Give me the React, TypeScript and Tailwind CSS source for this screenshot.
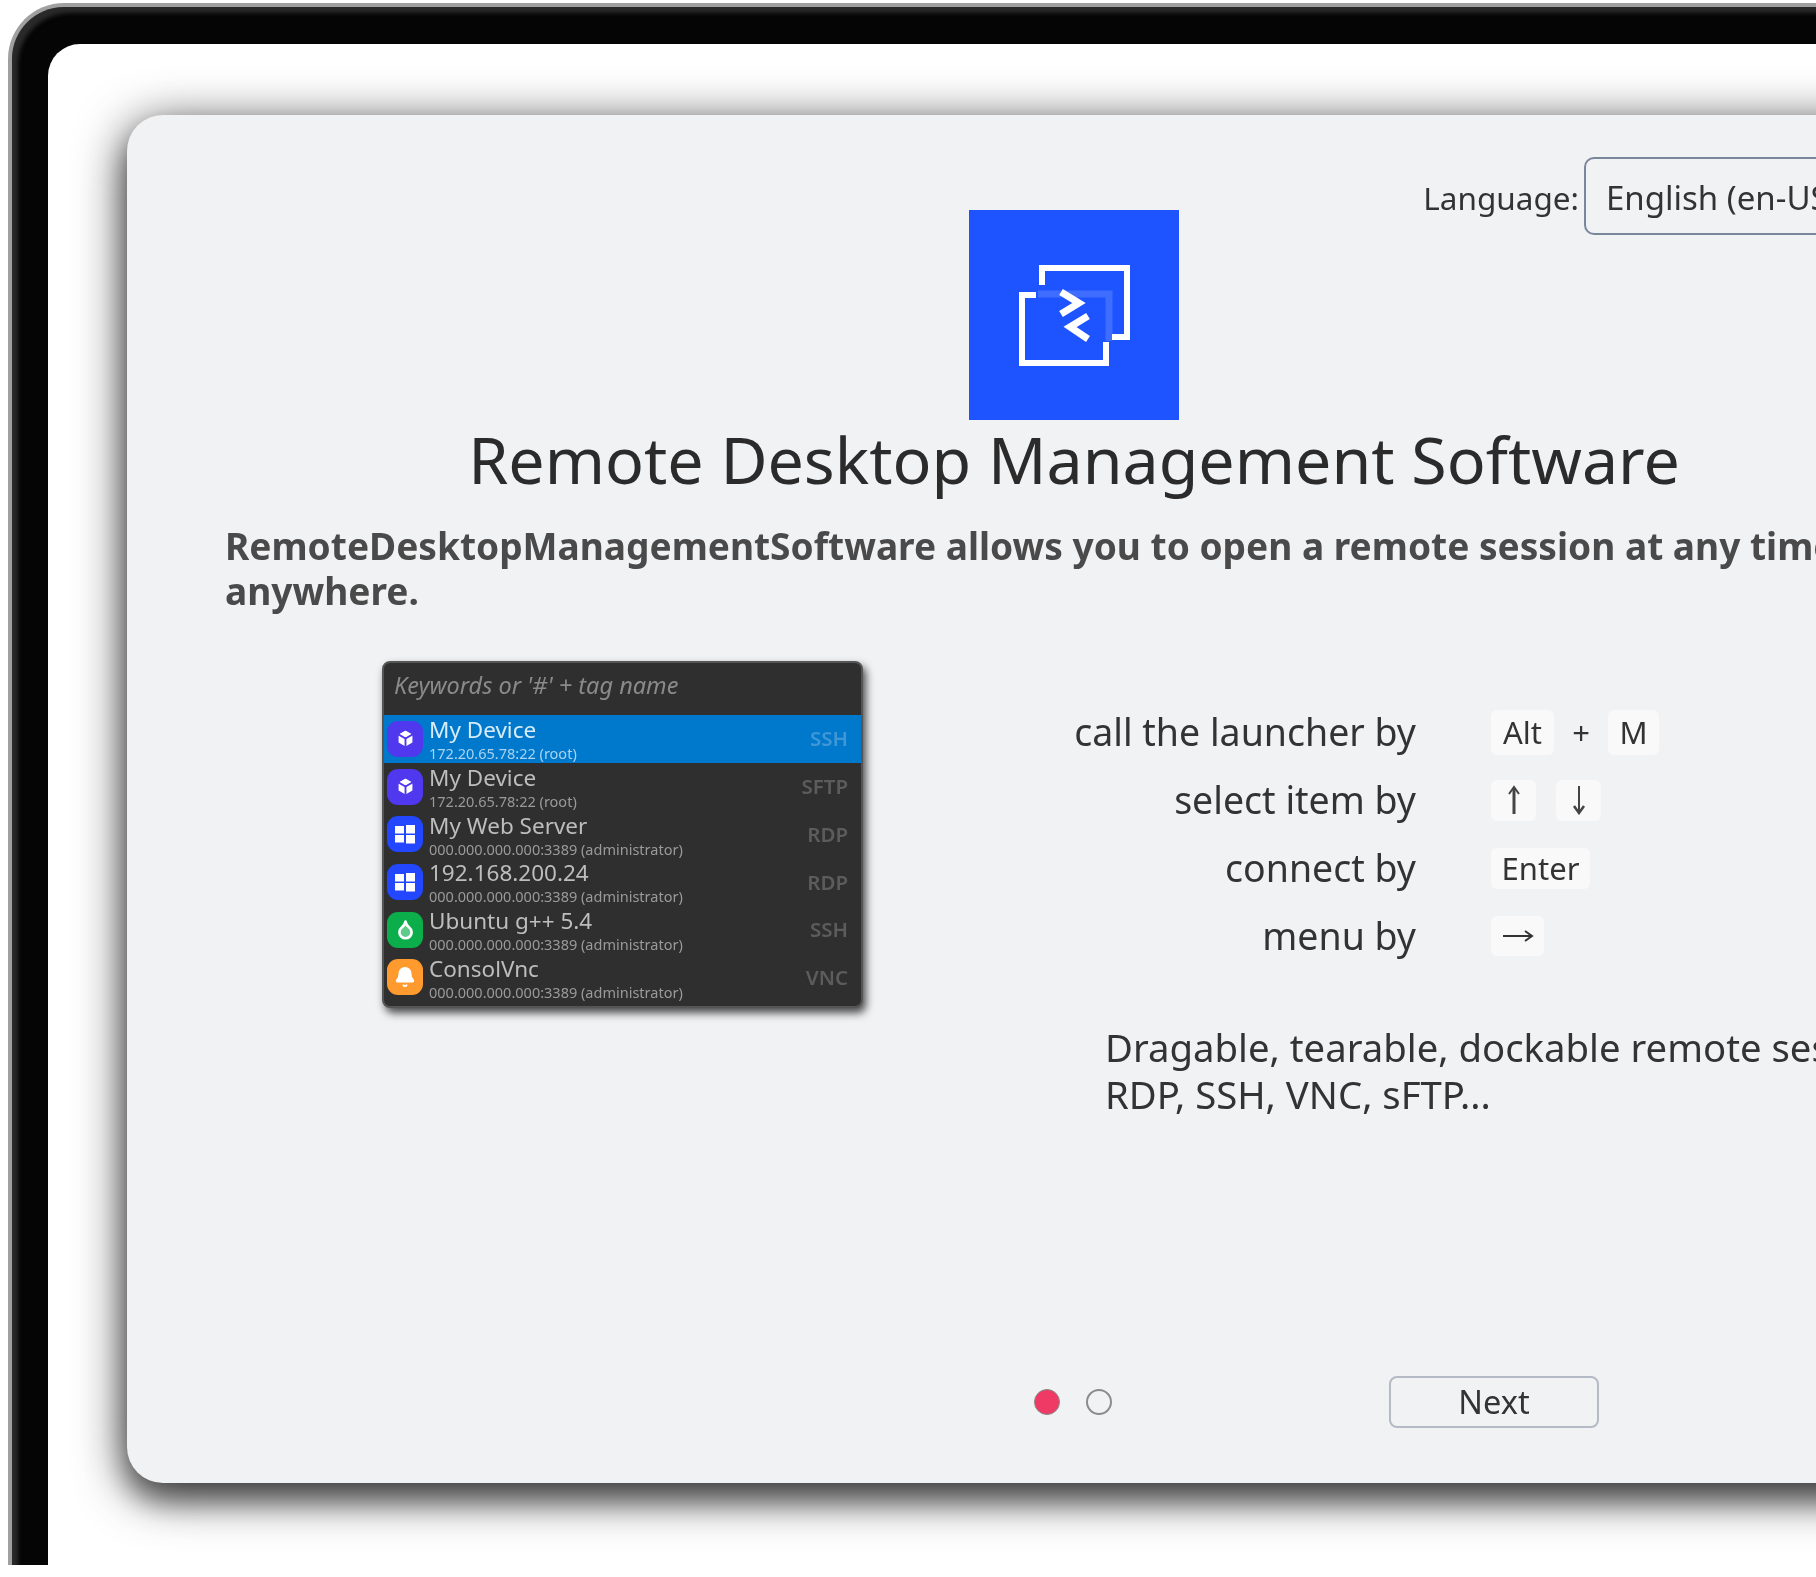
import { Bell, Box, Droplet } from "lucide-react"

const sans = "font-['Noto_Sans','Open_Sans',sans-serif]"

const sessions = [
  { name: "My Device", sub: "172.20.65.78:22 (root)", tag: "SSH", icon: "cube", active: true },
  { name: "My Device", sub: "172.20.65.78:22 (root)", tag: "SFTP", icon: "cube", active: false },
  { name: "My Web Server", sub: "000.000.000.000:3389 (administrator)", tag: "RDP", icon: "win", active: false },
  { name: "192.168.200.24", sub: "000.000.000.000:3389 (administrator)", tag: "RDP", icon: "win", active: false },
  { name: "Ubuntu g++ 5.4", sub: "000.000.000.000:3389 (administrator)", tag: "SSH", icon: "drop", active: false },
  { name: "ConsolVnc", sub: "000.000.000.000:3389 (administrator)", tag: "VNC", icon: "bell", active: false },
]

function WinGlyph() {
  return (
    <svg width="22" height="22" viewBox="0 0 22 22" fill="#fff">
      <rect x="1" y="3" width="9" height="7.5" />
      <rect x="12" y="2" width="9" height="8.5" />
      <rect x="1" y="12" width="9" height="7.5" />
      <rect x="12" y="12" width="9" height="8.5" />
    </svg>
  )
}

function SessionIcon({ kind }: { kind: string }) {
  if (kind === "cube") {
    return (
      <div className="flex h-[36px] w-[36px] items-center justify-center rounded-[11px] bg-[#5038ee]">
        <Box size={21} color="#5038ee" fill="#fff" strokeWidth={2.2} />
      </div>
    )
  }
  if (kind === "win") {
    return (
      <div className="flex h-[36px] w-[36px] items-center justify-center rounded-[11px] bg-[#2346ff]">
        <WinGlyph />
      </div>
    )
  }
  if (kind === "drop") {
    return (
      <div className="flex h-[36px] w-[36px] items-center justify-center rounded-[11px] bg-[#0bae4a]">
        <Droplet size={21} color="#fff" fill="#fff" fillOpacity={0.35} strokeWidth={3} />
      </div>
    )
  }
  return (
    <div className="flex h-[36px] w-[36px] items-center justify-center rounded-[11px] bg-[#ff9a2e]">
      <Bell size={22} color="#fff" fill="#fff" strokeWidth={2} />
    </div>
  )
}

function Launcher() {
  return (
    <div className="h-[347px] w-[481px] shrink-0 overflow-hidden rounded-[8px] border-2 border-[#555] bg-[#2f2f2f] shadow-[3px_5px_8px_rgba(0,0,0,0.7)] blur-[0.4px]">
      <div className="flex h-[52px] items-center pb-[6px] pl-[10px] text-[23.5px] italic text-[#8a8a8a]">
        Keywords or '#' + tag name
      </div>
      {sessions.map((s, i) => (
        <div
          key={i}
          className={
            s.active
              ? "flex h-[47.7px] items-center bg-[#0078cc] pl-[3px] pr-[13px]"
              : "flex h-[47.7px] items-center pl-[3px] pr-[13px]"
          }
        >
          <SessionIcon kind={s.icon} />
          <div className="ml-[6px] flex min-w-0 flex-1 flex-col">
            <span className={s.active ? "text-[22.5px] leading-[27px] text-[#d6ecfa]" : "text-[22.5px] leading-[27px] text-[#bdbdbd]"}>
              {s.name}
            </span>
            <span className={s.active ? "mt-[2px] text-[14.5px] leading-[16px] text-[#a9d3f0]" : "mt-[2px] text-[14.5px] leading-[16px] text-[#9a9a9a]"}>
              {s.sub}
            </span>
          </div>
          <span className={s.active ? "text-[20.5px] font-semibold text-[#3f97d6]" : "text-[20.5px] font-semibold text-[#5c5c5c]"}>
            {s.tag}
          </span>
        </div>
      ))}
    </div>
  )
}

function Key({ children, className }: { children: React.ReactNode; className: string }) {
  return (
    <div className={`flex items-center justify-center rounded-[6px] bg-[#f9f9f9] text-[31px] text-[#333] ${className}`}>
      {children}
    </div>
  )
}

// thin key arrows: a long shaft with a very small head
function UpArrow() {
  return (
    <svg width="14" height="30" viewBox="0 0 14 30" fill="none" stroke="#444" strokeWidth="2">
      <path d="M7 3V29" strokeWidth="3" />
      <path d="M2 9L7 2L12 9" />
    </svg>
  )
}

function DownArrow() {
  return (
    <svg width="14" height="30" viewBox="0 0 14 30" fill="none" stroke="#444" strokeWidth="2">
      <path d="M7 1V27" />
      <path d="M2 21L7 28L12 21" strokeWidth="2.5" />
    </svg>
  )
}

function RightArrow() {
  return (
    <svg width="32" height="16" viewBox="0 0 32 16" fill="none" stroke="#333" strokeWidth="2">
      <path d="M1 8H30" />
      <path d="M23 3L30 8L23 13" />
    </svg>
  )
}

function Logo() {
  return (
    <svg width="210" height="210" viewBox="0 0 210 210" className="mx-auto block shrink-0">
      <rect width="210" height="210" fill="#1e54ff" />
      <path d="M69 84H140V131" fill="none" stroke="#fff" strokeOpacity="0.15" strokeWidth="7" />
      <path d="M73 75V58H158V127H143" fill="none" stroke="#fff" strokeWidth="6" />
      <path d="M67 85H53V153H137V132" fill="none" stroke="#fff" strokeWidth="6" />
      <path d="M92 82L110 93L92 104" fill="none" stroke="#fff" strokeWidth="7" />
      <path d="M119 106L101 117L119 129" fill="none" stroke="#fff" strokeWidth="7" />
    </svg>
  )
}

export default function App() {
  return (
    <div className={`h-[1577px] w-[1816px] overflow-hidden bg-white ${sans}`}>
      <div className="ml-[8px] mt-[3px] h-[1562px] w-[1900px] rounded-tl-[56px] border-l-[4px] border-t-[4px] border-[#a0a0a0] bg-[#050505] pl-[36px] pt-[37px] shadow-[inset_6px_6px_4px_#2a2a2a]">
        <div className="h-[1560px] w-[1900px] rounded-tl-[32px] bg-white pl-[79px] pt-[71px]">
          <div className="flex h-[1368px] w-[1894px] flex-col rounded-[36px] bg-[#f1f2f4] pt-[42px] shadow-[0_10px_50px_rgba(0,0,0,0.8),0_18px_26px_rgba(0,0,0,0.35)] blur-[0.3px]">
            <div className="flex h-[53px] items-start justify-end pr-[137px]">
              <span className="mr-[5px] mt-[21px] text-[31.5px] leading-[40px] text-[#333]">Language:</span>
              <div className="flex h-[78px] w-[300px] shrink-0 items-center rounded-[10px] border-2 border-[#7a869c] pl-[20px] pt-[3px] text-[33px] text-[#333]">
                English (en-US)
              </div>
            </div>
            <Logo />
            <h1 className="text-center text-[64.5px] font-normal leading-[78px] text-[#2b2b2b]">
              Remote Desktop Management Software
            </h1>
            <p className="mx-[98px] mt-[25px] text-[37.1px] font-bold leading-[45px] text-[#4a4a4a]">
              RemoteDesktopManagementSoftware allows you to open a remote session at any time, anywhere.
            </p>
            <div className="ml-[255px] mt-[48px] flex">
              <Launcher />
              <div className="ml-[155px] mt-[37px] flex flex-col">
                <div className="flex h-[68px] items-center">
                  <span className="w-[398px] text-right text-[37.5px] text-[#333]">call the launcher by</span>
                  <div className="ml-[75px] flex items-center">
                    <Key className="h-[45px] w-[63px]">Alt</Key>
                    <span className="w-[54px] text-center text-[31px] text-[#333]">+</span>
                    <Key className="h-[45px] w-[51px]">M</Key>
                  </div>
                </div>
                <div className="flex h-[68px] items-center">
                  <span className="w-[398px] text-right text-[37.5px] text-[#333]">select item by</span>
                  <div className="ml-[75px] flex items-center gap-[20px]">
                    <Key className="h-[41px] w-[45px]"><UpArrow /></Key>
                    <Key className="h-[41px] w-[45px]"><DownArrow /></Key>
                  </div>
                </div>
                <div className="flex h-[68px] items-center">
                  <span className="w-[398px] text-right text-[37.5px] text-[#333]">connect by</span>
                  <div className="ml-[75px] flex items-center">
                    <Key className="h-[41px] w-[99px]">Enter</Key>
                  </div>
                </div>
                <div className="flex h-[68px] items-center">
                  <span className="w-[398px] text-right text-[37.5px] text-[#333]">menu by</span>
                  <div className="ml-[75px] flex items-center">
                    <Key className="h-[40px] w-[53px]"><RightArrow /></Key>
                  </div>
                </div>
                <p className="ml-[87px] mt-[54px] w-[900px] text-[38.3px] leading-[47px] text-[#333]">
                  Dragable, tearable, dockable remote sessions
                  <br />
                  RDP, SSH, VNC, sFTP...
                </p>
              </div>
            </div>
            <div className="mb-[55px] ml-[907px] mt-auto flex items-center">
              <span className="h-[26px] w-[26px] rounded-full border border-[#888] bg-[#ee3a64]" />
              <span className="ml-[26px] h-[26px] w-[26px] rounded-full border-2 border-[#8c8c8c]" />
              <button className="ml-[277px] h-[52px] w-[210px] rounded-[8px] border-2 border-[#b4bbc6] text-[32.5px] text-[#333]">
                Next
              </button>
            </div>
          </div>
        </div>
      </div>
    </div>
  )
}
